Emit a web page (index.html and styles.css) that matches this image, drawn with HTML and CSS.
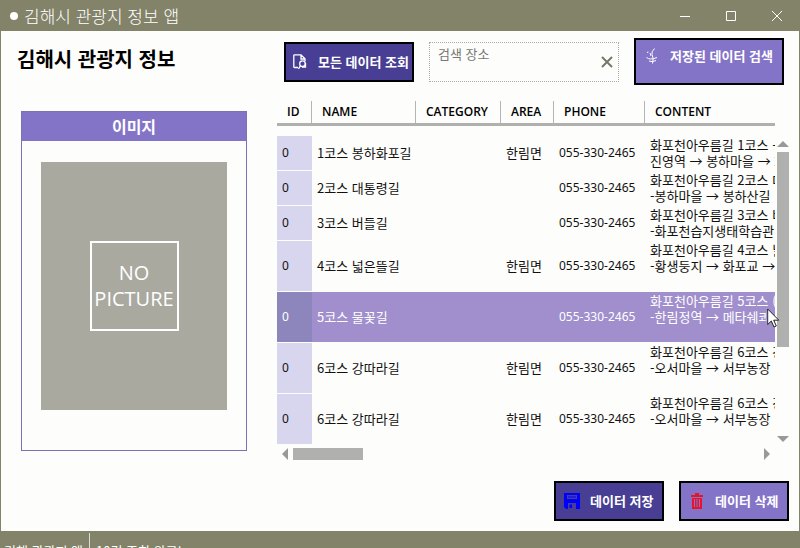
FILE: index.html
```html
<!DOCTYPE html>
<html lang="ko">
<head>
<meta charset="utf-8">
<title>김해시 관광지 정보 앱</title>
<link rel="stylesheet" href="styles.css">
</head>
<body>
<div class="app">
  <header class="titlebar">
    <span class="dot"></span>
    <span class="app-name">김해시 관광지 정보 앱</span>
    <button class="win-btn" type="button" aria-label="최소화"><svg width="10" height="10"><path d="M0 5.5H10"/></svg></button>
    <button class="win-btn" type="button" aria-label="최대화"><svg width="10" height="10"><path d="M.5.5H9.5V9.5H.5Z"/></svg></button>
    <button class="win-btn" type="button" aria-label="닫기"><svg width="10" height="10"><path d="M0 0L10 10M10 0L0 10"/></svg></button>
  </header>

  <main class="main">
    <div class="toolbar">
      <h1 class="heading">김해시 관광지 정보</h1>
      <button class="btn dark wide" type="button">
        <svg class="line-icon" width="14" height="16" viewBox="0 0 14 16"><path d="M5 13.500H1.500Q.8 13.500 .8 12.800V1.500Q.8.8 1.500.8H8L12 4.800V7M8 1V5H12"/><circle cx="9.500" cy="9.700" r="2.800"/><path d="M7.500 11.700L5.500 15M12.500 9V13H9"/></svg>
        <span>모든 데이터 조회</span>
      </button>
      <div class="search">
        <input class="search-input" type="text" placeholder="검색 장소" aria-label="검색 장소">
        <button class="clear" type="button" aria-label="지우기"><svg width="12" height="12"><path d="M1 1L11 11M11 1L1 11"/></svg></button>
      </div>
      <button class="btn light tall" type="button">
        <svg class="line-icon thin" width="12" height="16" viewBox="0 0 12 16"><path d="M8.500 .5Q5 4 6 6.500Q8 10 6.500 15.500M2 3.500L1.500 5M4 5L5 8M.5 9.500Q4 12.500 11 9.500M3 13Q6 14.500 10 12.500"/></svg>
        <span>저장된 데이터 검색</span>
      </button>
    </div>

    <div class="content">
      <section class="panel">
        <h2 class="panel-title">이미지</h2>
        <div class="panel-body">
          <div class="picture"><div class="no-picture">NO<br>PICTURE</div></div>
        </div>
      </section>

      <section class="grid-pane">
        <div class="table-view">
          <table class="data">
            <colgroup><col class="c-id"><col class="c-name"><col class="c-category"><col class="c-area"><col class="c-phone"><col></colgroup>
            <thead><tr><th>ID</th><th>NAME</th><th>CATEGORY</th><th>AREA</th><th>PHONE</th><th>CONTENT</th></tr></thead>
            <tbody>
              <tr><td>0</td><td>1코스 봉하화포길</td><td></td><td>한림면</td><td>055-330-2465</td><td>화포천아우름길 1코스 -<br>진영역 → 봉하마을 → 화</td></tr>
              <tr><td>0</td><td>2코스 대통령길</td><td></td><td></td><td>055-330-2465</td><td>화포천아우름길 2코스 대<br>-봉하마을 → 봉하산길</td></tr>
              <tr><td>0</td><td>3코스 버들길</td><td></td><td></td><td>055-330-2465</td><td>화포천아우름길 3코스 버<br>-화포천습지생태학습관</td></tr>
              <tr class="three"><td>0</td><td>4코스 넓은뜰길</td><td></td><td>한림면</td><td>055-330-2465</td><td>화포천아우름길 4코스 넓<br>-황생둥지 → 화포교 →</td></tr>
              <tr class="three selected"><td>0</td><td>5코스 물꽃길</td><td></td><td></td><td>055-330-2465</td><td>화포천아우름길 5코스 (<br>-한림정역 → 메타쉐콰</td></tr>
              <tr class="three"><td>0</td><td>6코스 강따라길</td><td></td><td>한림면</td><td>055-330-2465</td><td>화포천아우름길 6코스 강<br>-오서마을 → 서부농장</td></tr>
              <tr class="three"><td>0</td><td>6코스 강따라길</td><td></td><td>한림면</td><td>055-330-2465</td><td>화포천아우름길 6코스 강<br>-오서마을 → 서부농장</td></tr>
            </tbody>
          </table>
        </div>
        <div class="vscroll">
          <svg width="12" height="6"><path d="M0 6L6 0L12 6Z"/></svg>
          <div class="vtrack"><div class="vthumb"></div></div>
          <svg width="12" height="6"><path d="M0 0L6 6L12 0Z"/></svg>
        </div>
        <div class="hscroll">
          <svg width="6" height="12"><path d="M6 0L0 6L6 12Z"/></svg>
          <div class="htrack"><div class="hthumb"></div></div>
          <svg width="6" height="12"><path d="M0 0L6 6L0 12Z"/></svg>
        </div>
        <svg class="cursor" width="13" height="20" viewBox="0 0 13 20"><path d="M.7 1V16.500L4.300 13L7 19L9.300 18L6.700 12.200H11.800Z"/></svg>
      </section>
    </div>

    <div class="actions">
      <button class="btn dark" type="button">
        <svg width="16" height="16" viewBox="0 0 16 16"><path class="blue" fill-rule="evenodd" d="M0 0H16V16H2L0 14ZM3 2V6H13V2ZM4 10V16H12V10ZM5.500 11.500H8V15H5.500Z"/><path class="blue" d="M4 3.500H12V4.500H4Z"/></svg>
        <span>데이터 저장</span>
      </button>
      <button class="btn light" type="button">
        <svg width="12" height="16" viewBox="0 0 12 16"><path class="red" fill-rule="evenodd" d="M4 0H8V2H12V4H0V2H4ZM1 5H11V16H1ZM3 6V14H4V6ZM5.500 6V14H6.500V6ZM8 6V14H9V6Z"/></svg>
        <span>데이터 삭제</span>
      </button>
    </div>
  </main>

  <footer class="status"><span>김해 관광지 앱</span><span>10건 조회 완료!</span></footer>
</div>
</body>
</html>
```
FILE: styles.css
```css
* { box-sizing: border-box; }

body {
  margin: 0;
  overflow: hidden;
  color: #111;
  background: #83836a;
  font: 13px/16px "Noto Sans CJK KR", sans-serif;
}

button { font: inherit; padding: 0; cursor: pointer; }
svg { display: block; flex: none; }
.app { height: 100vh; }

.titlebar {
  display: flex;
  align-items: center;
  height: 31px;
  padding-left: 10px;
  color: #fff;
}
.dot { width: 8px; height: 8px; margin-right: 6px; border-radius: 50%; background: #fff; }
.app-name { flex: 1; font-size: 17px; font-weight: 300; line-height: 24px; }
.win-btn {
  display: flex;
  align-items: center;
  justify-content: center;
  width: 46px;
  height: 31px;
  border: 0;
  background: none;
}
.win-btn svg { fill: none; stroke: #fff; }

.main {
  margin: 0 1px;
  padding-bottom: 10px;
  background: #fdfdfb;
}

.toolbar {
  display: flex;
  align-items: center;
  gap: 15px;
  padding: 7px 15px 0 16px;
}
.heading {
  flex: none;
  width: 252px;
  margin: 0;
  padding-bottom: 6px;
  color: #000;
  font-size: 20px;
  font-weight: 700;
  line-height: 26px;
}

.btn {
  display: flex;
  align-items: center;
  gap: 10px;
  height: 40px;
  width: 110px;
  padding: 0 8px;
  border: 2px solid #000;
  color: #fff;
  font-weight: 700;
  white-space: nowrap;
}
.btn.dark { background: #483f94; }
.btn.light { background: #8474c8; }
.btn.light:not(.tall) { gap: 12px; padding-left: 10px; }
.btn.wide { width: 130px; padding: 0 7px; gap: 11px; }
.btn.tall { width: 150px; height: 47px; align-items: flex-start; gap: 12px; padding: 8px 10px; }
.line-icon { fill: none; stroke: #fff; stroke-width: 1.3; }
.thin { stroke-width: 1; }
.blue { fill: #00f; }
.red { fill: #e8142c; }

.search {
  display: flex;
  flex: 1;
  align-items: center;
  min-width: 0;
  height: 40px;
  padding-right: 5px;
  border: 1px dotted #aaa;
}
.search-input {
  flex: 1;
  min-width: 0;
  height: 38px;
  padding: 3px 8px 19px;
  border: 0;
  outline: 0;
  background: none;
  font: inherit;
}
.search-input::placeholder { color: #777; opacity: 1; }
.clear { border: 0; background: none; }
.clear svg { fill: none; stroke: #777768; stroke-width: 2; }

.content {
  display: flex;
  align-items: flex-start;
  gap: 30px;
  padding: 16px 10px 0 20px;
}

.panel { flex: none; width: 226px; margin-top: 10px; border: 1px solid #7d70b4; }
.panel-title {
  margin: 0;
  background: #8474c8;
  color: #fff;
  font-size: 16px;
  font-weight: 700;
  line-height: 29px;
  text-align: center;
}
.panel-body { padding: 21px 19px 40px; }
.picture {
  display: flex;
  justify-content: center;
  align-items: center;
  height: 248px;
  background: #a9a9a0;
}
.no-picture {
  width: 89px;
  padding: 17px 0;
  border: 2px solid #fff;
  color: #fff;
  font: 20px/26px "Open Sans", sans-serif;
  text-align: center;
}

.grid-pane {
  position: relative;
  display: grid;
  grid-template-columns: minmax(0, 1fr) 12px;
  gap: 2px;
  flex: 1;
  min-width: 0;
}
.table-view { height: 345px; overflow: hidden; }
.data {
  width: 100%;
  table-layout: fixed;
  border-collapse: separate;
  border-spacing: 0;
  white-space: nowrap;
}
.c-id { width: 35px; }
.c-name { width: 104px; }
.c-category { width: 85px; }
.c-area { width: 53px; }
.c-phone { width: 91px; }

.data th {
  height: 25px;
  padding: 0 10px;
  border-right: 1px solid #b4b4b4;
  border-bottom: 3px solid #b0b0ae;
  color: #000;
  font: 600 12px/22px "Open Sans", sans-serif;
  text-align: left;
}
.data th:last-child { border-right: 0; }
.data tbody::before { content: ""; display: block; height: 10px; }
.data td {
  padding: 1px 0 1px 5px;
  border-bottom: 1px solid #fdfdfb;
  overflow: hidden;
}
.three td { height: 51px; }
.three td:last-child { vertical-align: top; }
.data td:first-child { background: #d8d6ee; }
.data td:first-child, .data td:nth-child(5) { font: 12px/16px "Noto Sans", sans-serif; }
.data .selected td { background: #a08fcc; color: #fff; }
.data .selected td:first-child { background: #8c86bc; }

.vscroll { display: flex; flex-direction: column; padding: 40px 0 4px; }
.vscroll path, .hscroll path { fill: #999; }
.vtrack { flex: 1; padding: 5px 0; }
.vthumb { height: 70%; background: #b0b0ae; }
.hscroll { display: flex; padding: 0 5px; }
.htrack { flex: 1; padding: 0 5px; }
.hthumb { width: 15%; height: 12px; background: #b0b0ae; }

.cursor { position: absolute; left: 490px; top: 207px; }
.cursor path { fill: #fff; stroke: #222; }

.actions {
  display: flex;
  justify-content: flex-end;
  gap: 15px;
  padding: 21px 10px 0 0;
}

.status { display: flex; height: 40px; padding: 2px 0 0 4px; color: #fff; }
.status span { padding: 10px 6px 0 0; }
.status span + span { padding-left: 6px; border-left: 1px solid #ddd; }
```
